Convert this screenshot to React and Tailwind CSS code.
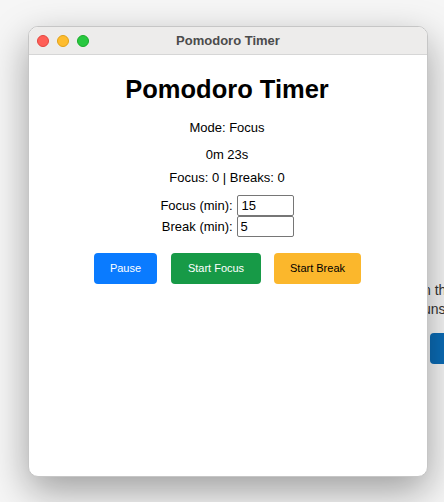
import { useState } from 'react';

const font = { fontFamily: '"Liberation Sans", Arial, sans-serif' };

const TrafficLights = () => (
  <div className="absolute left-[8px] top-[8px] flex gap-[8px]">
    <span className="h-[12px] w-[12px] rounded-full bg-[#ff5f57] border border-[#e2463f]" />
    <span className="h-[12px] w-[12px] rounded-full bg-[#febc2e] border border-[#e1a116]" />
    <span className="h-[12px] w-[12px] rounded-full bg-[#28c840] border border-[#1aab29]" />
  </div>
);

export default function App() {
  const [focus, setFocus] = useState('15');
  const [brk, setBrk] = useState('5');

  return (
    <div className="relative h-[502px] w-[444px] overflow-hidden bg-[#f6f6f6]" style={font}>
      {/* page content behind the window */}
      <div className="absolute left-[423px] top-[281px] text-[14px] leading-[19px] text-[#333]">
        <div className="whitespace-nowrap">n the</div>
        <div className="whitespace-nowrap">uns</div>
      </div>
      <div className="absolute left-[430px] top-[333px] h-[31px] w-[40px] rounded-[4px] bg-[#0b6cb6]" />

      {/* window */}
      <div className="absolute left-[28px] top-[26px] flex h-[451px] w-[400px] flex-col overflow-hidden rounded-[10px] border border-[#c6c6c6] bg-white shadow-[0_14px_38px_rgba(0,0,0,0.36)]">
        <div className="relative flex h-[28px] shrink-0 items-center justify-center border-b border-[#d6d6d6] bg-[#edeceb]">
          <TrafficLights />
          <span className="text-[13px] font-bold text-[#4b4b4b]">Pomodoro Timer</span>
        </div>

        <div className="flex flex-col items-center pt-[20px] pr-[2px] text-[13px] text-black">
          <h1 className="text-[25.5px] font-bold leading-[29px]">Pomodoro Timer</h1>
          <p className="mt-[16px] leading-[15px]">Mode: Focus</p>
          <p className="mt-[12px] leading-[15px]">0m 23s</p>
          <p className="mt-[8px] leading-[15px]">Focus: 0 | Breaks: 0</p>

          <div className="mt-[10px] flex flex-col items-end">
            <label className="flex items-center gap-[4px]">
              <span>Focus (min):</span>
              <input
                value={focus}
                onChange={(e) => setFocus(e.target.value)}
                className="h-[21px] w-[57px] rounded-[2px] border border-[#767676] px-[4px] text-[13px] outline-none"
              />
            </label>
            <label className="flex items-center gap-[4px]">
              <span>Break (min):</span>
              <input
                value={brk}
                onChange={(e) => setBrk(e.target.value)}
                className="h-[21px] w-[57px] rounded-[2px] border border-[#767676] px-[3px] text-[13px] outline-none"
              />
            </label>
          </div>

          <div className="mt-[16px] flex gap-[13px] pl-[1px] text-[11px]">
            <button className="mr-[1px] h-[31px] w-[63px] rounded-[4px] bg-[#0a7bff] text-white">Pause</button>
            <button className="h-[31px] w-[90px] rounded-[4px] bg-[#179a47] text-white">Start Focus</button>
            <button className="h-[31px] w-[87px] rounded-[4px] bg-[#fbb72c] text-black">Start Break</button>
          </div>
        </div>
      </div>
    </div>
  );
}
